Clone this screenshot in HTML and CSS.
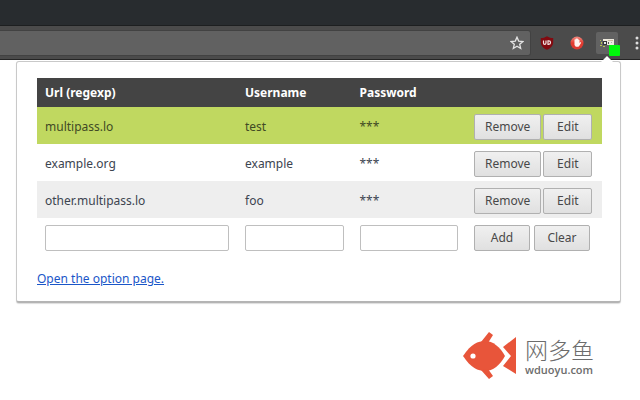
FILE: index.html
```html
<!DOCTYPE html>
<html lang="en">
<head>
<meta charset="utf-8">
<title>MultiPass</title>
<link rel="stylesheet" href="styles.css">
</head>
<body>
<header class="titlebar"></header>
<nav class="toolbar" aria-label="Browser toolbar">
  <div class="address">
    <button class="icon-button star" aria-label="Bookmark">
      <svg width="14" height="14" viewBox="0 0 14 14"><path d="M7 1.2 8.7 5.1 12.9 5.5 9.7 8.3 10.7 12.5 7 10.3 3.3 12.5 4.3 8.3 1.1 5.5 5.3 5.1Z" fill="none" stroke="#e4e4e4" stroke-width="1.3"/></svg>
    </button>
  </div>
  <button class="icon-button" aria-label="Content blocker">
    <svg width="14" height="14" viewBox="0 0 14 14"><path d="M7 0.3C5 1.6 3 2.1.8 2.1V6c0 4 2.7 6.3 6.2 7.7C10.5 12.3 13.2 10 13.2 6V2.1C11 2.1 9 1.6 7 .3Z" fill="#820a10"/><path d="M3.500 4.500v2.500q0 1.300 1.200 1.300T6 7V4.500M8 4.800v3.500h.8a1.700 1.700 0 0 0 0-3.500Z" fill="none" stroke="#f4e4e4" stroke-width="1.200"/></svg>
  </button>
  <button class="icon-button" aria-label="Ad blocker">
    <svg width="14" height="14" viewBox="0 0 14 14"><defs><linearGradient id="red" x2="0" y2="1"><stop stop-color="#f08a80"/><stop offset=".5" stop-color="#e33b30"/><stop offset="1" stop-color="#d93a33"/></linearGradient></defs><circle cx="7" cy="7" r="6.500" fill="url(#red)"/><path d="M4.500 6.500V3.600h1V2.700h1V2.300h1v.6h1v1h1v3l1-.8.7.6-2 3.200-.8.900H5.800L4.500 9Z" fill="#fff2ef"/></svg>
  </button>
  <button class="icon-button active" aria-label="MultiPass">
    <svg width="16" height="14" viewBox="0 0 16 14"><path d="M4 3h11v6H4z" fill="#eeeade"/><path d="M4 5h4v4H4z" fill="#353535"/><path d="M5 6h2v2H5z" fill="#e8e8e8"/><path d="M9 4h5v1H9z" fill="#c9bd9c"/><path d="M9 6h1v2H9z" fill="#555"/><path d="M12 6h1v1h-1z" fill="#aaa"/><path d="M1 4h1v1H1zM2 6h1v2H2zM1 9h2v1H1zM4 10h2v1H4z" fill="#b5c34d"/></svg>
    <span class="badge"></span>
  </button>
  <button class="icon-button" aria-label="Menu">
    <svg width="4" height="14" viewBox="0 0 4 14"><g fill="#dedede"><circle cx="2" cy="2" r="1.500"/><circle cx="2" cy="7" r="1.500"/><circle cx="2" cy="12" r="1.500"/></g></svg>
  </button>
</nav>
<main class="popup">
  <form>
    <table class="credentials">
      <colgroup><col class="col-url"><col class="col-text"><col class="col-text"><col class="col-actions"></colgroup>
      <thead>
        <tr><th>Url (regexp)</th><th>Username</th><th>Password</th><th></th></tr>
      </thead>
      <tbody>
        <tr class="match"><td>multipass.lo</td><td>test</td><td>***</td><td><div class="actions"><button type="button" class="btn">Remove</button><button type="button" class="btn">Edit</button></div></td></tr>
        <tr><td>example.org</td><td>example</td><td>***</td><td><div class="actions"><button type="button" class="btn">Remove</button><button type="button" class="btn">Edit</button></div></td></tr>
        <tr class="shaded"><td>other.multipass.lo</td><td>foo</td><td>***</td><td><div class="actions"><button type="button" class="btn">Remove</button><button type="button" class="btn">Edit</button></div></td></tr>
        <tr class="entry"><td><input class="field" type="text" aria-label="Url (regexp)"></td><td><input class="field" type="text" aria-label="Username"></td><td><input class="field" type="password" aria-label="Password"></td><td><div class="actions wide"><button type="button" class="btn">Add</button><button type="button" class="btn">Clear</button></div></td></tr>
      </tbody>
    </table>
  </form>
  <a class="options" href="#options">Open the option page.</a>
</main>
<footer class="brand">
  <svg width="54" height="48" viewBox="0 0 54 48"><g fill="#e8553a"><path d="M0 24C8 12 15 9 22 9c8 0 15 6 20 15-5 9-12 15-20 15C15 39 8 36 0 24Z"/><path d="M18 10 26 0l4 3-5 8ZM18 38l8 9 4-3-5-7ZM53 5v37L40 34l8-10-8-9Z"/></g><circle cx="10" cy="24" r="2.600" fill="#fff"/></svg>
  <div class="brand-text"><span class="brand-name" lang="zh">网多鱼</span><span class="brand-url">wduoyu.com</span></div>
</footer>
</body>
</html>
```
FILE: styles.css
```css
* { box-sizing: border-box; }

body {
  margin: 0;
  background: #fff;
  color: #3c4450;
  font: 12px/18px "Noto Sans", sans-serif;
  overflow: hidden;
}

.titlebar {
  height: 26px;
  background: #282c2f;
  border-bottom: 1px solid #1d1f20;
}

.toolbar {
  display: flex;
  align-items: center;
  gap: 8px;
  height: 34px;
  background: #4b4b4b;
  border-bottom: 1px solid #252525;
}

.address {
  flex: 1;
  display: flex;
  align-items: center;
  justify-content: flex-end;
  height: 26px;
  margin-right: -3px;
  padding-right: 2px;
  background: #616161;
  border: 1px solid #424242;
  border-left: 0;
  border-radius: 0 3px 3px 0;
}

.icon-button {
  position: relative;
  flex: none;
  display: flex;
  align-items: center;
  justify-content: center;
  width: 22px;
  height: 22px;
  padding: 0;
  border: 0;
  border-radius: 2px;
  background: none;
}

.toolbar > .icon-button:last-child { margin-right: -8px; }

.active { background: #626262; }

.badge {
  position: absolute;
  right: -2px;
  bottom: -2px;
  width: 11px;
  height: 11px;
  border-radius: 1px;
  background: #00f80b;
}

.popup {
  position: relative;
  margin: 1px 19px 0 16px;
  padding: 16px 18px 13px 20px;
  border: 1px solid #c9c9c9;
  border-bottom: 2px solid #b4b4b4;
  border-radius: 3px;
  background: #fff;
  box-shadow: 0 1px 1px #ddd;
}

.popup::before {
  content: "";
  position: absolute;
  top: -6px;
  right: 7px;
  border: 6px solid transparent;
  border-top: 0;
  border-bottom-color: #fff;
}

.credentials {
  width: 100%;
  table-layout: fixed;
  border-collapse: collapse;
}

.col-url { width: 200px; }
.col-actions { width: 136px; }

th {
  height: 29px;
  padding: 0 8px;
  background: #444;
  color: #fff;
  text-align: left;
}

td {
  height: 37px;
  padding: 2px 8px 0;
}

.match { background: #c0d860; color: #414a25; }
.shaded { background: #eee; }

.entry td {
  height: 40px;
  padding-top: 0;
}

.actions {
  display: flex;
  gap: 2px;
}

.btn {
  height: 26px;
  min-width: 49px;
  padding: 0 10px;
  border: 1px solid #b0b0b0;
  border-radius: 2px;
  background: linear-gradient(#f0f0f0, #e0e0e0);
  color: #484848;
  font: inherit;
  text-align: center;
}

.wide { gap: 4px; }
.wide .btn { width: 56px; }

.field {
  display: block;
  width: 100%;
  height: 26px;
  padding: 0 4px;
  border: 1px solid #bfbfbf;
  border-radius: 2px;
  background: #fff;
  font: inherit;
}

.options {
  display: inline-block;
  margin-top: 12px;
  color: #1a56c8;
}

.brand {
  display: flex;
  align-items: center;
  justify-content: flex-end;
  gap: 8px;
  margin: 29px 46px 0 0;
}

.brand-text {
  display: flex;
  flex-direction: column;
  gap: 2px;
  color: #6c6c6c;
}

.brand-name {
  font: 300 23px/26px "Noto Sans CJK SC", sans-serif;
}

.brand-url {
  font: 600 11px/12px "Open Sans", sans-serif;
}
```
